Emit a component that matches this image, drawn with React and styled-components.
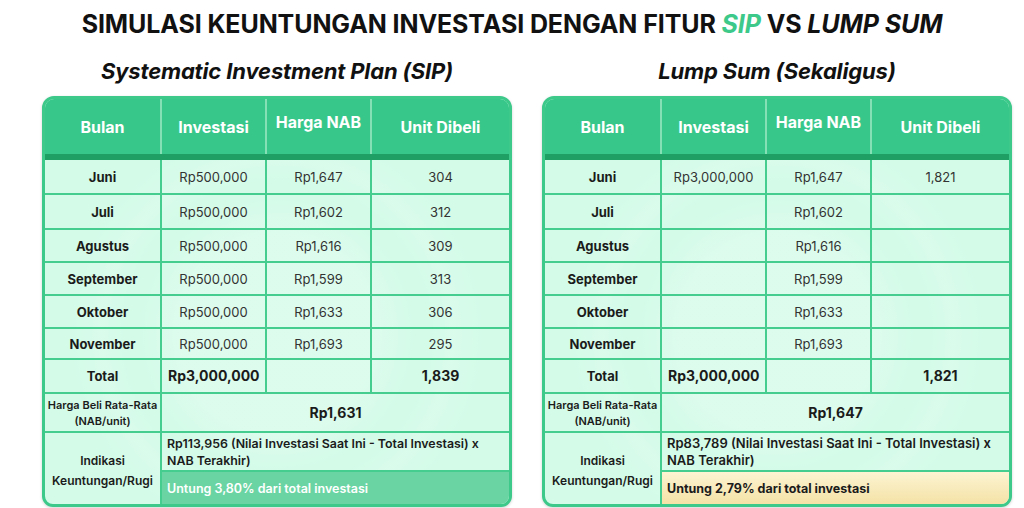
import React from "react";
import styled, { createGlobalStyle } from "styled-components";

const Global = createGlobalStyle`
  html, body { margin: 0; padding: 0; background: #ffffff; }
  body { font-family: Inter, "Noto Sans", "Liberation Sans", sans-serif; color: #1b1b1b; }
`;

const Page = styled.div`
  width: 1024px;
  height: 508px;
  overflow: hidden;
  display: flex;
  flex-direction: column;
  box-sizing: border-box;
  padding-top: 9px;
`;

const Title = styled.h1`
  margin: 0;
  text-align: center;
  font-size: 25px;
  line-height: 30px;
  font-weight: 700;
  letter-spacing: -0.1px;
  color: #111;
`;

const Accent = styled.em`
  font-style: italic;
  color: ${(p) => (p.$green ? "#3cc98a" : "#111")};
`;

const Columns = styled.div`
  display: grid;
  grid-template-columns: 470px 470px;
  column-gap: 30px;
  padding-left: 42px;
  margin-top: 19px;
`;

const Section = styled.section`
  display: flex;
  flex-direction: column;
`;

const Subtitle = styled.h2`
  margin: 0 0 12px;
  text-align: center;
  font-size: 22px;
  line-height: 26px;
  font-weight: 700;
  font-style: italic;
  letter-spacing: -0.15px;
  color: #111;
`;

const Card = styled.div`
  border: 3px solid #3cc98a;
  border-radius: 12px 12px 11px 11px;
  overflow: hidden;
  box-shadow: 0 1px 3px rgba(0, 0, 0, 0.18);
  background:
    radial-gradient(circle at 50% 58%, rgba(255,255,255,0.22) 0 100px, rgba(255,255,255,0) 140px 150px, rgba(255,255,255,0.14) 175px, rgba(255,255,255,0) 210px),
    #d3fbe8;
`;

const Table = styled.table`
  width: 100%;
  border-collapse: collapse;
  table-layout: fixed;
`;

const Th = styled.th`
  height: 46px;
  padding: 0;
  background: #38c78a;
  color: #ffffff;
  font-size: 16px;
  font-weight: 700;
  border-left: 2px solid #86e0b5;
  border-bottom: 6px solid #1f9f64;
  padding-bottom: ${(p) => (p.$raise ? "9px" : "0")};
  &:first-child { border-left: none; }
`;

const Td = styled.td`
  border: 2px solid #45cc8f;
  padding: 0 6px;
  text-align: center;
  font-size: ${(p) => (p.$size ? p.$size : "13px")};
  font-weight: ${(p) => (p.$bold ? 700 : p.$semi ? 600 : 400)};
  color: ${(p) => (p.$bold || p.$semi ? "#1b1b1b" : "#333")};
  line-height: ${(p) => (p.$lh ? p.$lh : "16px")};
  &:first-child { border-left: none; }
  &:last-child { border-right: none; }
`;

const NoteCell = styled.td`
  border: 2px solid #45cc8f;
  border-right: none;
  padding: 0 5px 1px;
  vertical-align: bottom;
  text-align: left;
  font-size: ${(p) => p.$size};
  font-weight: 600;
  line-height: 17px;
  color: #1b1b1b;
`;

const Row = styled.tr`
  height: ${(p) => p.$h}px;
`;

const LastRow = styled.tr`
  height: 33px;
  td { border-bottom: none; }
`;

const Result = styled.td`
  border: 2px solid #45cc8f;
  border-bottom: none;
  border-right: none;
  padding: 0 5px;
  font-size: ${(p) => p.$size};
  font-weight: ${(p) => (p.$tone === "green" ? 600 : 700)};
  text-align: left;
  color: ${(p) => (p.$tone === "green" ? "#ffffff" : "#1b1b1b")};
  background: ${(p) =>
    p.$tone === "green"
      ? "#6ad5a3"
      : "linear-gradient(180deg, #fcf4d2 0%, #f4e2a6 100%)"};
`;

const months = ["Juni", "Juli", "Agustus", "September", "Oktober", "November"];
const heights = [37, 35, 33, 33, 33, 31];

const sip = {
  title: "Systematic Investment Plan (SIP)",
  rows: [
    ["Rp500,000", "Rp1,647", "304"],
    ["Rp500,000", "Rp1,602", "312"],
    ["Rp500,000", "Rp1,616", "309"],
    ["Rp500,000", "Rp1,599", "313"],
    ["Rp500,000", "Rp1,633", "306"],
    ["Rp500,000", "Rp1,693", "295"],
  ],
  total: ["Rp3,000,000", "1,839"],
  avg: "Rp1,631",
  indication: "Rp113,956 (Nilai Investasi Saat Ini - Total Investasi) x NAB Terakhir)",
  noteSize: "12.4px",
  result: "Untung 3,80% dari total investasi",
  resultSize: "12.5px",
  tone: "green",
};

const lump = {
  title: "Lump Sum (Sekaligus)",
  rows: [
    ["Rp3,000,000", "Rp1,647", "1,821"],
    ["", "Rp1,602", ""],
    ["", "Rp1,616", ""],
    ["", "Rp1,599", ""],
    ["", "Rp1,633", ""],
    ["", "Rp1,693", ""],
  ],
  total: ["Rp3,000,000", "1,821"],
  avg: "Rp1,647",
  indication: "Rp83,789 (Nilai Investasi Saat Ini - Total Investasi) x NAB Terakhir)",
  noteSize: "13px",
  result: "Untung 2,79% dari total investasi",
  resultSize: "12.5px",
  tone: "yellow",
};

function SimTable({ data }) {
  return (
    <Section>
      <Subtitle>{data.title}</Subtitle>
      <Card>
        <Table>
          <colgroup>
            <col style={{ width: 116 }} />
            <col style={{ width: 105 }} />
            <col style={{ width: 105 }} />
            <col />
          </colgroup>
          <thead>
            <tr>
              <Th>Bulan</Th>
              <Th>Investasi</Th>
              <Th $raise>Harga NAB</Th>
              <Th>Unit Dibeli</Th>
            </tr>
          </thead>
          <tbody>
            {data.rows.map((r, i) => (
              <Row key={months[i]} $h={heights[i]}>
                <Td $bold>{months[i]}</Td>
                <Td>{r[0]}</Td>
                <Td>{r[1]}</Td>
                <Td>{r[2]}</Td>
              </Row>
            ))}
            <Row $h={34}>
              <Td $bold>Total</Td>
              <Td $bold $size="14px">{data.total[0]}</Td>
              <Td />
              <Td $bold $size="14px">{data.total[1]}</Td>
            </Row>
            <Row $h={39}>
              <Td $semi $size="11px" $lh="16px" style={{ padding: "0 2px" }}>
                Harga Beli Rata-Rata (NAB/unit)
              </Td>
              <Td colSpan={3} $bold $size="14px">{data.avg}</Td>
            </Row>
            <Row $h={39}>
              <Td rowSpan={2} $semi $size="12px" $lh="20px" style={{ borderBottom: "none", padding: "4px 2px 0" }}>
                Indikasi Keuntungan/Rugi
              </Td>
              <NoteCell colSpan={3} $size={data.noteSize}>
                {data.indication}
              </NoteCell>
            </Row>
            <LastRow>
              <Result colSpan={3} $tone={data.tone} $size={data.resultSize}>
                {data.result}
              </Result>
            </LastRow>
          </tbody>
        </Table>
      </Card>
    </Section>
  );
}

export default function App() {
  return (
    <Page>
      <Global />
      <Title>
        SIMULASI KEUNTUNGAN INVESTASI DENGAN FITUR <Accent $green>SIP</Accent> VS{" "}
        <Accent>LUMP SUM</Accent>
      </Title>
      <Columns>
        <SimTable data={sip} />
        <SimTable data={lump} />
      </Columns>
    </Page>
  );
}
